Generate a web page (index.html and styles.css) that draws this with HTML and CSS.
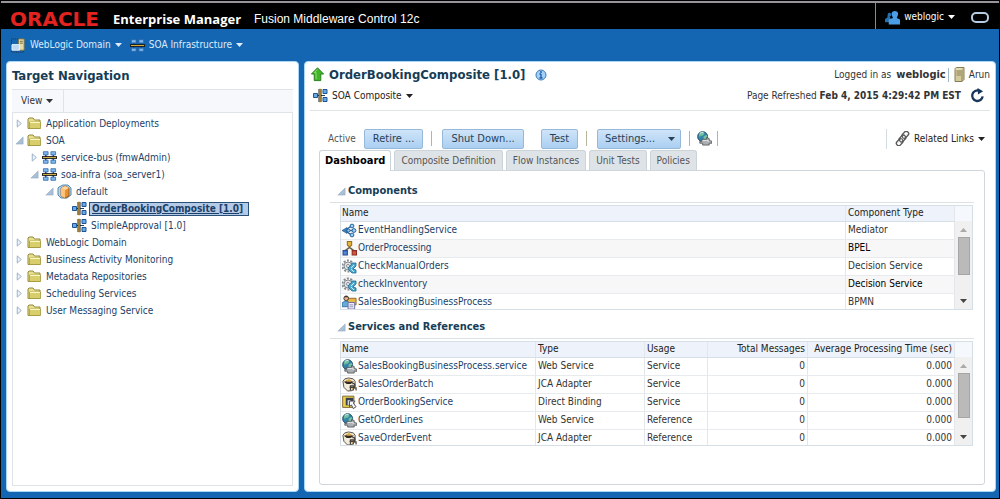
FILE: index.html
```
<!DOCTYPE html>
<html lang="en">
<head>
<meta charset="utf-8">
<title>Enterprise Manager - OrderBookingComposite [1.0]</title>
<link rel="stylesheet" href="styles.css">
</head>
<body>
<svg class="sprite" aria-hidden="true">
  <symbol id="caret" viewBox="0 0 7 4"><path d="M0 0h7L3.5 4z" fill="currentColor"/></symbol>
  <symbol id="closed" viewBox="0 0 8 10"><path d="M1.500 1v8L6 5z" fill="#edf4fb" stroke="#92aac6"/></symbol>
  <symbol id="open" viewBox="0 0 10 10"><path d="M9 1v8H1z" fill="#a9bfd6" stroke="#91a8c0" stroke-width=".6"/></symbol>
  <symbol id="folder" viewBox="0 0 15 13"><path d="M1 11.500V2l1-1h4l1.500 2h5.500v8.500z" fill="#e8e08e" stroke="#91883a"/><path d="M2.500 11V5h11v6.500h-12z" fill="#d8cf6c" stroke="#a0963f" stroke-width=".7"/><path d="M3 5.500h10" stroke="#fbf7c4"/></symbol>
  <symbol id="infra" viewBox="0 0 16 14"><path d="M4 3v8M12 3v8" stroke="#1d4c80" stroke-width="1.500"/><path d="M1.500.8h5v3.400h-5zM9.500.8h5v3.400h-5zM1.500 9.800h5v3.400h-5zM9.500 9.800h5v3.400h-5z" fill="#7fb6ee" stroke="#2a64a4" stroke-width=".8"/><path d="M0 5.500h16v3H0z" fill="#1c1c18"/><path d="M1 7h14" stroke="#dfb64a"/></symbol>
  <symbol id="composite" viewBox="0 0 15 14"><path d="M3 7h9M10 3h3M10 11h3" stroke="#1c4067"/><path d="M.5 5h4v4h-4zM10 1h4v4h-4zM10 9h4v4h-4z" fill="#67a8e6" stroke="#1d5592"/><path d="M5.500.5h3v13h-3z" fill="#1d1b16"/><path d="M7 0v14" stroke="#e4b44a" stroke-width="1.300"/></symbol>
  <symbol id="domain" viewBox="0 0 16 16"><path d="M.5 1h13v14H.5z" fill="none" stroke="#152f55" stroke-dasharray="1 1"/><path d="M8 1h6v12H8z" fill="#e5dbaa" stroke="#837947"/><path d="M9.500 3.500h3M9.500 5.500h3" stroke="#6a6238"/><path d="M1 7h8v6H1z" fill="#bcd9f5" stroke="#e7f2fc"/></symbol>
  <symbol id="box" viewBox="0 0 15 15"><path d="M2 3l4-2h5l3 3v7l-4 3H4l-3-3V4z" fill="#b8d7ee" stroke="#4f88b0"/><path d="M4 4l4-2 4 2v8l-4 2-4-2z" fill="#e9902e" stroke="#8c4a14" stroke-width=".8"/><path d="M4 4l4 2v8l-4-2z" fill="#ffc276"/><path d="M4 4l4-2 4 2-4 2z" fill="#ffd9a0"/></symbol>
  <symbol id="users" viewBox="0 0 16 15"><path d="M3 3.500a2 2 0 1 1 2 3l1 2-1 4H0V9l2.500-1.500z" fill="#286fae"/><path d="M7 3.500C7-.5 14-.5 14 3.500c0 2-1 3-1.500 4.500L16 9.500V15H4V9.500L8.500 8C8 6.500 7 5.500 7 3.500z" fill="#4b9de6"/></symbol>
  <symbol id="up" viewBox="0 0 15 16"><path d="M7.500.8L14 7.500h-3v7H4v-7H1z" fill="#41b529" stroke="#237b19"/><path d="M7.500 2.500L4 6h2v7" fill="none" stroke="#8ee071"/></symbol>
  <symbol id="info" viewBox="0 0 12 12"><circle cx="6" cy="6" r="5" fill="#a5d0f5" stroke="#3b79ba"/><path d="M6 5v4M4.500 5H6M4.500 9h3" stroke="#175ba3" stroke-width="1.300"/><circle cx="6" cy="3" r=".9" fill="#175ba3"/></symbol>
  <symbol id="server" viewBox="0 0 11 15"><path d="M1 1.500l2-1h7v12l-2 2H1z" fill="#d4cb9d" stroke="#847c55"/><path d="M8 2.500v12M2.500 4H7M2.500 6H7M2.500 8H7" stroke="#8b8259"/><path d="M1.500 2H8" stroke="#f5efd1"/></symbol>
  <symbol id="refresh" viewBox="0 0 16 16"><path d="M10 3A5.600 5.600 0 1 0 13.500 9" fill="none" stroke="#19375c" stroke-width="2.500"/><path d="M8 0l6 3.500L8.500 7z" fill="#19375c"/></symbol>
  <symbol id="globe" viewBox="0 0 16 16"><circle cx="6" cy="6" r="5.300" fill="#3383aa" stroke="#244e68"/><path d="M3 2l3-1 2 2-2 2H4l-1 2-1-3zM7 6l3-2 1 2-2 3-2-1z" fill="#74c2a0"/><path d="M3 2.500q2-1.500 4-1" stroke="#d5f3fa" fill="none"/><path d="M5 9h5V7l3 1v2l3 1v2h-3v2H6v-2H3v-2h2z" fill="#adb0b2" stroke="#53575b" stroke-width=".9"/><path d="M6 10h4l3 1" stroke="#f0f1f2" fill="none"/></symbol>
  <symbol id="link" viewBox="0 0 16 16"><g fill="none" stroke="#5a5a5a" stroke-width="1.500"><rect x="8.500" y="0" width="5" height="8" rx="2.500" transform="rotate(42 11 4)"/><rect x="5.500" y="4" width="5" height="8" rx="2.500" transform="rotate(42 8 8)"/><rect x="2.500" y="8" width="5" height="8" rx="2.500" transform="rotate(42 5 12)"/></g><path d="M4 12l8-8" stroke="#bbb"/></symbol>
  <symbol id="mediator" viewBox="0 0 15 14"><path d="M3 7L10 2M3 7h9M3 7l7 5" stroke="#285e91" stroke-width="1.300"/><path d="M0 7l5-3v6z" fill="#3880bd" stroke="#245481" stroke-width=".6"/><g fill="#9bd0f5" stroke="#28659c"><circle cx="10" cy="2.500" r="1.900"/><circle cx="12" cy="7" r="1.900"/><circle cx="10" cy="11.500" r="1.900"/><circle cx="6.500" cy="7" r="1.500"/></g></symbol>
  <symbol id="bpel" viewBox="0 0 14 14"><path d="M7 4v3M3 9l4-3 4 3" stroke="#695f48" stroke-width="1.400" fill="none"/><path d="M5 .5h4V4L7 5.500 5 4z" fill="#e3b43e" stroke="#957021"/><path d="M1 9h4v4H1z" fill="#5484d5" stroke="#254b94"/><path d="M9.500 9h4v4h-4z" fill="#d55543" stroke="#8c2b21"/></symbol>
  <symbol id="rule" viewBox="0 0 15 15"><circle cx="6" cy="7" r="5.500" fill="none" stroke="#858b90" stroke-width="2" stroke-dasharray="2 1.450"/><circle cx="6" cy="7" r="4" fill="#e1e4e6" stroke="#858b90"/><circle cx="6" cy="7" r="1.500" fill="#fff" stroke="#858b90"/><path d="M6 9l3-3 1-2h4v3l-3 3 3 1v3h-4L7 11z" fill="#4da9cf" stroke="#20678c" stroke-width=".8"/><path d="M9 9l3-3M9 10l3 3" stroke="#c9edf8"/></symbol>
  <symbol id="bpmn" viewBox="0 0 16 15"><path d="M5 3h10v7H5z" fill="#e9b748" stroke="#8a6723"/><circle cx="4.500" cy="3" r="2.500" fill="#eab58a" stroke="#3a332e"/><path d="M2.500 2q2-3 4 0" fill="#333"/><path d="M0 12V8l3-2h3l2 2v4z" fill="#64aadc" stroke="#39739e"/><path d="M6.500 7.500h7v7h-7z" fill="#eeeefa" stroke="#6c6c9a"/><path d="M8 10h4M8 12h4" stroke="#8f8fbc"/></symbol>
  <symbol id="jca" viewBox="0 0 16 15"><path d="M1 4l2-2.500 4-1 5 1L14 4v6l-3 4-5 .5-4-4z" fill="#f1ecdc" stroke="#554d42"/><path d="M2 4.500l4-1 7 1L9 7H5z" fill="#322820"/><path d="M3.500 1.500l2 1.500 2-2 1.500 2 2-1-2 2.500H5z" fill="#d5a64b"/><path d="M11 6.500h2q2 3-1 4H8M9 14V9h4M12 14v-3h3v3" fill="none" stroke="#46423c" stroke-width="1.300"/><path d="M10 12h2" stroke="#d5b040"/></symbol>
  <symbol id="direct" viewBox="0 0 16 15"><path d="M.7.700h12v12H.7z" fill="#ead04b" stroke="#79642b"/><path d="M4 2.500h8v8H4z" fill="#39414c"/><path d="M6 5h3v5H6z" fill="#d5dbe2"/><path d="M8 6h6l-2 2 3 4-3 2-2-4-2 2z" fill="#f8f8fa" stroke="#4a4a56"/></symbol>
</svg>

<header class="brandbar">
  <div class="brand">
    <span class="logo">ORACLE</span>
    <h1>Enterprise Manager</h1>
    <span class="product">Fusion Middleware Control 12c</span>
  </div>
  <div class="session">
    <button class="menu"><svg class="icon"><use href="#users"/></svg>weblogic<svg class="caret"><use href="#caret"/></svg></button>
    <span class="ring"></span>
  </div>
</header>

<nav class="menubar">
  <button class="menu"><svg class="icon"><use href="#domain"/></svg>WebLogic Domain<svg class="caret"><use href="#caret"/></svg></button>
  <button class="menu"><svg class="icon"><use href="#infra"/></svg>SOA Infrastructure<svg class="caret"><use href="#caret"/></svg></button>
</nav>

<div class="workspace">
  <aside class="panel side">
    <h2>Target Navigation</h2>
    <div class="viewbar"><button class="menu">View<svg class="caret"><use href="#caret"/></svg></button></div>
    <ul class="tree">
      <li><svg class="twist"><use href="#closed"/></svg><svg class="icon"><use href="#folder"/></svg><a href="#">Application Deployments</a></li>
      <li><svg class="twist"><use href="#open"/></svg><svg class="icon"><use href="#folder"/></svg><a href="#">SOA</a></li>
      <li class="l1"><svg class="twist"><use href="#closed"/></svg><svg class="icon"><use href="#infra"/></svg><a href="#">service-bus (fmwAdmin)</a></li>
      <li class="l1"><svg class="twist"><use href="#open"/></svg><svg class="icon"><use href="#infra"/></svg><a href="#">soa-infra (soa_server1)</a></li>
      <li class="l2"><svg class="twist"><use href="#open"/></svg><svg class="icon"><use href="#box"/></svg><a href="#">default</a></li>
      <li class="l3"><span class="twist"></span><svg class="icon"><use href="#composite"/></svg><a class="selected" href="#">OrderBookingComposite [1.0]</a></li>
      <li class="l3"><span class="twist"></span><svg class="icon"><use href="#composite"/></svg><a href="#">SimpleApproval [1.0]</a></li>
      <li><svg class="twist"><use href="#closed"/></svg><svg class="icon"><use href="#folder"/></svg><a href="#">WebLogic Domain</a></li>
      <li><svg class="twist"><use href="#closed"/></svg><svg class="icon"><use href="#folder"/></svg><a href="#">Business Activity Monitoring</a></li>
      <li><svg class="twist"><use href="#closed"/></svg><svg class="icon"><use href="#folder"/></svg><a href="#">Metadata Repositories</a></li>
      <li><svg class="twist"><use href="#closed"/></svg><svg class="icon"><use href="#folder"/></svg><a href="#">Scheduling Services</a></li>
      <li><svg class="twist"><use href="#closed"/></svg><svg class="icon"><use href="#folder"/></svg><a href="#">User Messaging Service</a></li>
    </ul>
  </aside>

  <main class="panel main">
    <div class="pagehead">
      <div class="line title"><svg class="icon"><use href="#up"/></svg><h2>OrderBookingComposite [1.0]</h2><svg class="info"><use href="#info"/></svg></div>
      <div class="line right">Logged in as <b class="user">weblogic</b><svg class="server"><use href="#server"/></svg>Arun</div>
      <div class="line"><button class="menu target"><svg class="icon"><use href="#composite"/></svg>SOA Composite<svg class="caret"><use href="#caret"/></svg></button></div>
      <div class="line right">Page Refreshed&nbsp;<b>Feb 4, 2015 4:29:42 PM EST</b><button class="refresh" aria-label="Refresh"><svg class="icon"><use href="#refresh"/></svg></button></div>
    </div>

    <div class="toolbar">
      <span class="state">Active</span>
      <button class="btn">Retire ...</button>
      <i class="sep"></i>
      <button class="btn">Shut Down...</button>
      <button class="btn test">Test</button>
      <i class="sep"></i>
      <button class="btn settings">Settings...<svg class="caret"><use href="#caret"/></svg></button>
      <i class="sep"></i>
      <button class="plain" aria-label="Web services"><svg class="icon"><use href="#globe"/></svg></button>
      <i class="sep"></i>
      <button class="menu related"><svg class="icon"><use href="#link"/></svg>Related Links<svg class="caret"><use href="#caret"/></svg></button>
    </div>

    <div class="tabs" role="tablist">
      <button role="tab" aria-selected="true" class="tab active">Dashboard</button>
      <button role="tab" class="tab">Composite Definition</button>
      <button role="tab" class="tab">Flow Instances</button>
      <button role="tab" class="tab">Unit Tests</button>
      <button role="tab" class="tab">Policies</button>
    </div>

    <div class="content">
      <section>
        <h3><svg class="twist"><use href="#open"/></svg>Components</h3>
        <div class="scrolltable striped">
          <table>
            <colgroup><col><col class="c-kind"></colgroup>
            <thead><tr><th>Name</th><th>Component Type</th></tr></thead>
            <tbody>
              <tr><td><a href="#"><svg class="icon"><use href="#mediator"/></svg>EventHandlingService</a></td><td>Mediator</td></tr>
              <tr><td><a href="#"><svg class="icon"><use href="#bpel"/></svg>OrderProcessing</a></td><td>BPEL</td></tr>
              <tr><td><a href="#"><svg class="icon"><use href="#rule"/></svg>CheckManualOrders</a></td><td>Decision Service</td></tr>
              <tr><td><a href="#"><svg class="icon"><use href="#rule"/></svg>checkInventory</a></td><td>Decision Service</td></tr>
              <tr><td><a href="#"><svg class="icon"><use href="#bpmn"/></svg>SalesBookingBusinessProcess</a></td><td>BPMN</td></tr>
            </tbody>
          </table>
          <div class="scroll"><svg class="caret arrow-up"><use href="#caret"/></svg><span class="thumb"></span><svg class="caret"><use href="#caret"/></svg></div>
        </div>
      </section>

      <section>
        <h3><svg class="twist"><use href="#open"/></svg>Services and References</h3>
        <div class="scrolltable">
          <table>
            <colgroup><col><col class="c-kind"><col class="c-usage"><col class="c-total"><col class="c-avg"></colgroup>
            <thead><tr><th>Name</th><th>Type</th><th>Usage</th><th class="num">Total Messages</th><th class="num">Average Processing Time (sec)</th></tr></thead>
            <tbody>
              <tr><td><a href="#"><svg class="icon"><use href="#globe"/></svg>SalesBookingBusinessProcess.service</a></td><td>Web Service</td><td>Service</td><td class="num">0</td><td class="num">0.000</td></tr>
              <tr><td><a href="#"><svg class="icon"><use href="#jca"/></svg>SalesOrderBatch</a></td><td>JCA Adapter</td><td>Service</td><td class="num">0</td><td class="num">0.000</td></tr>
              <tr><td><a href="#"><svg class="icon"><use href="#direct"/></svg>OrderBookingService</a></td><td>Direct Binding</td><td>Service</td><td class="num">0</td><td class="num">0.000</td></tr>
              <tr><td><a href="#"><svg class="icon"><use href="#globe"/></svg>GetOrderLines</a></td><td>Web Service</td><td>Reference</td><td class="num">0</td><td class="num">0.000</td></tr>
              <tr><td><a href="#"><svg class="icon"><use href="#jca"/></svg>SaveOrderEvent</a></td><td>JCA Adapter</td><td>Reference</td><td class="num">0</td><td class="num">0.000</td></tr>
            </tbody>
          </table>
          <div class="scroll"><svg class="caret arrow-up"><use href="#caret"/></svg><span class="thumb tall"></span><svg class="caret"><use href="#caret"/></svg></div>
        </div>
      </section>
    </div>
  </main>
</div>
</body>
</html>
```
FILE: styles.css
```
* { box-sizing: border-box; }

body {
  margin: 0;
  min-height: 100vh;
  display: flex;
  flex-direction: column;
  border: 1px solid #000;
  background: #1566b2;
  color: #333;
  font: 10px/14px "DejaVu Sans Condensed", "DejaVu Sans", sans-serif;
}

h1, h2, h3 { margin: 0; }
button { font: inherit; color: inherit; background: none; border: 0; padding: 0; white-space: nowrap; }
a { color: #1c3f68; text-decoration: none; }
svg { flex: none; }
.sprite { position: absolute; width: 0; height: 0; }
.icon { width: 15px; height: 15px; }
.caret { width: 7px; height: 4px; }
.twist { width: 9px; height: 9px; }

.menu { display: flex; align-items: center; gap: 4px; }

/* Brand bar */
.brandbar {
  display: flex;
  justify-content: space-between;
  height: 28px;
  padding-left: 9px;
  background: #000;
  border-top: 2px solid #99939b;
  color: #fff;
}
.brand { display: flex; align-items: center; padding-top: 6px; white-space: nowrap; }
.logo { width: 103px; color: #e2231f; font: bold 20px/20px "DejaVu Sans", sans-serif; }
.brand h1 { width: 141px; font: bold 13px/20px "Open Sans", sans-serif; }
.product { font-family: "Liberation Sans", sans-serif; font-size: 12px; }
.session { display: flex; align-items: center; gap: 16px; padding: 2px 10px 0 9px; border-left: 1px solid #8b8b8b; }
.ring { width: 18px; height: 11px; border: 2px solid #b4cbe2; border-radius: 5px; }

/* Application menus */
.menubar { display: flex; align-items: center; gap: 8px; height: 32px; padding-left: 10px; color: #dcecfb; }

/* Panels */
.workspace { flex: 1; display: grid; grid-template-columns: 293px minmax(0, 1fr); gap: 5px; padding: 0 3px 6px 5px; }
.panel { background: #fff; border: 1px solid #a8d8f4; border-radius: 4px; }
h2 { color: #163d56; font-size: 13px; line-height: 18px; white-space: nowrap; }

.side { display: flex; flex-direction: column; padding: 5px 5px 5px; }
.side h2 { padding-bottom: 4px; }
.viewbar { display: flex; height: 23px; background: #f6f8fc; border-top: 1px solid #dfe4e8; }
.viewbar .menu { padding: 0 10px 0 9px; border-right: 1px solid #dfe4e8; }
.tree { flex: 1; margin: 0; padding: 2px 0; list-style: none; border: 1px solid #dfe4e8; }
.tree li { display: flex; align-items: center; height: 17px; padding-left: 2px; white-space: nowrap; }
.tree .icon { margin: 0 4px 0 3px; }
.tree .l1 { padding-left: 17px; }
.tree .l2 { padding-left: 32px; }
.tree .l3 { padding-left: 47px; }
.tree .selected { margin-left: -2px; padding: 0 5px 0 2px; border: 1px solid #294f7b; background: #b4cae5; font-weight: bold; line-height: 12px; text-decoration: underline; }

/* Page heading */
.main { display: flex; flex-direction: column; padding: 2px 5px 6px; }
.pagehead { display: grid; grid-template-columns: 1fr auto; padding-bottom: 4px; border-bottom: 1px solid #dfe4e5; }
.line { display: flex; align-items: center; height: 21px; }
.title { gap: 4px; }
.title h2 { padding-right: 6px; }
.info { width: 12px; height: 12px; }
.target { padding-left: 3px; color: #222; }
.right { justify-content: flex-end; white-space: nowrap; }
.user { margin-left: 5px; padding-right: 2px; border-right: 1px solid #9cbac9; font-size: 11px; }
.server { width: 11px; height: 15px; margin: 0 4px 0 5px; }
.refresh { display: flex; margin: 0 5px 0 9px; }

/* Actions */
.toolbar { display: flex; align-items: center; gap: 8px; padding: 18px 5px 2px 18px; height: 39px; }
.state { color: #555; }
.btn { height: 20px; padding: 0 8px; border: 1px solid #97b9d9; border-radius: 2px; background: linear-gradient(#cfe4f8, #abcff2); color: #293f57; font-size: 11px; }
.sep { width: 1px; height: 15px; margin-right: 2px; background: #b5b59a; }
.test { margin-left: 9px; }
.settings { display: flex; align-items: center; justify-content: space-between; width: 84px; padding: 0 5px 0 7px; }
.plain { display: flex; margin: 0 -3px; }
.related { margin-left: auto; height: 20px; padding-left: 8px; border-left: 1px solid #d1dce3; color: #222; }

/* Tabs */
.tabs { display: flex; gap: 3px; padding-left: 9px; }
.tab { height: 20px; padding: 0 6px; border: 1px solid #ccd3d9; border-bottom: 0; border-radius: 3px 3px 0 0; background: #dee3e8; color: #555; }
.tab.active { height: 21px; margin-bottom: -1px; padding: 0 5px; background: #fff; color: #000; font-size: 11px; font-weight: bold; z-index: 1; }

.content { flex: 1; margin: 0 5px 0 9px; padding: 11px 10px; border: 1px solid #cfd7dc; border-radius: 0 3px 3px 3px; }
section { padding-bottom: 8px; }
h3 { display: flex; align-items: center; gap: 2px; height: 21px; padding: 0 0 2px 7px; border-bottom: 1px solid #dbe2e6; color: #163d56; font-size: 11px; line-height: 16px; }

/* Tables */
.scrolltable { display: flex; margin: 2px 1px 0 10px; border: 1px solid #d6dfe6; height: 105px; overflow: hidden; }
table { flex: 1; width: 100%; min-width: 0; table-layout: fixed; border-collapse: collapse; }
th, td { height: 18px; padding: 0 2px; border-right: 1px solid #e3e7ea; text-align: left; white-space: nowrap; line-height: 14px; }
th { height: 15px; background: #eef2fa; border-bottom: 1px solid #d6dfe6; color: #222; font-weight: normal; }
th:first-child { padding-left: 1px; }
td { border-bottom: 1px solid #e8ebed; }
td:first-child { padding-left: 1px; }
td a { display: flex; align-items: center; gap: 1px; }
.striped tr:nth-child(even) td { background: #f7f7f7; color: #000; }
.num, th.num { text-align: right; }
.c-kind { width: 109px; }
.c-usage { width: 63px; }
.c-total { width: 100px; }
.c-avg { width: 147px; }
.scroll { display: flex; flex: none; flex-direction: column; align-items: center; width: 17px; padding: 7px 0 6px; border-top: 15px solid #f5f8fd; background: #f0f0f0; color: #444; }
.arrow-up { transform: rotate(180deg); color: #aaa; }
.thumb { width: 12px; height: 38px; margin: 5px 0 auto; background: #bababa; border: 1px solid #a6a6a6; }
.thumb.tall { height: 45px; }
```
